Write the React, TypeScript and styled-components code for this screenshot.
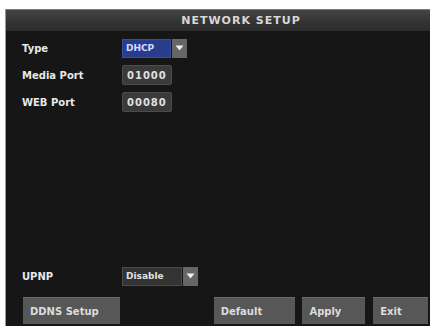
import React from "react";
import styled, { createGlobalStyle } from "styled-components";

const GlobalStyle = createGlobalStyle`
    html, body {
        margin: 0;
        padding: 0;
        background: #ffffff;
    }
`;

const Panel = styled.div`
    margin: 9px 4px 0 5px;
    width: 425px;
    height: 317px;
    background: #161616;
    border-left: 1px solid #9a9a9a;
    border-top: 1px solid #7a7a7a;
    box-sizing: border-box;
    display: flex;
    flex-direction: column;
    font-family: "DejaVu Sans", "Liberation Sans", sans-serif;
    font-weight: bold;
    color: #e4e4e4;
`;

const TitleBar = styled.div`
    height: 21px;
    background: linear-gradient(#444444, #333333 60%, #2c2c2c);
    display: flex;
    align-items: center;
    justify-content: center;
    padding-left: 46px;
    font-size: 11px;
    letter-spacing: 1px;
    color: #d8d8d8;
`;

const Body = styled.div`
    flex: 1;
    display: flex;
    flex-direction: column;
    padding: 7px 2px 2px 16px;
`;

const Row = styled.div<{ $gap?: number }>`
    display: flex;
    align-items: center;
    height: 20px;
    margin-bottom: ${p => p.$gap ?? 7}px;
`;

const Label = styled.div`
    width: 100px;
    font-size: 10px;
    color: #e8e8e8;
`;

const Field = styled.div`
    height: 20px;
    padding: 0 4px;
    background: #3a3a3a;
    border: 1px solid #4c4c4c;
    border-radius: 2px;
    box-sizing: border-box;
    display: flex;
    align-items: center;
    font-size: 10px;
    letter-spacing: 1px;
    color: #e0e0e0;
`;

const Select = styled.div`
    display: flex;
    height: 19px;
`;

const SelectValue = styled.div<{ $blue?: boolean; $width: number }>`
    width: ${p => p.$width}px;
    background: ${p => (p.$blue ? "#2a3c8c" : "#333333")};
    border: 1px solid ${p => (p.$blue ? "#3c4c9a" : "#4a4a4a")};
    box-sizing: border-box;
    display: flex;
    align-items: center;
    padding-left: 3px;
    font-size: 9px;
    color: ${p => (p.$blue ? "#d6dcff" : "#e0e0e0")};
`;

const Arrow = styled.div<{ $gapLeft?: number }>`
    width: 15px;
    margin-left: ${p => p.$gapLeft ?? 0}px;
    background: #666666;
    display: flex;
    align-items: center;
    justify-content: center;
`;

const Spacer = styled.div`
    flex: 1;
`;

const ButtonBar = styled.div`
    display: flex;
    height: 27px;
    margin-left: 1px;
`;

const Button = styled.div<{ $width: number; $gapLeft?: number }>`
    width: ${p => p.$width}px;
    margin-left: ${p => p.$gapLeft ?? 0}px;
    background: #575757;
    border-top: 1px solid #6a6a6a;
    box-sizing: border-box;
    display: flex;
    align-items: center;
    padding-left: 7px;
    font-size: 10px;
    color: #dcdcdc;
`;

const DownArrow = () => (
    <svg width="9" height="6" viewBox="0 0 9 6">
        <path d="M0.5 0.5 L8.5 0.5 L4.5 5.5 Z" fill="#f0f0f0" />
    </svg>
);

const App = () => {
    return (
        <>
            <GlobalStyle />
            <Panel>
                <TitleBar>NETWORK SETUP</TitleBar>
                <Body>
                    <Row>
                        <Label>Type</Label>
                        <Select>
                            <SelectValue $blue $width={49}>DHCP</SelectValue>
                            <Arrow $gapLeft={1}><DownArrow /></Arrow>
                        </Select>
                    </Row>
                    <Row>
                        <Label>Media Port</Label>
                        <Field>01000</Field>
                    </Row>
                    <Row>
                        <Label>WEB Port</Label>
                        <Field>00080</Field>
                    </Row>
                    <Spacer />
                    <Row $gap={11}>
                        <Label>UPNP</Label>
                        <Select>
                            <SelectValue $width={60}>Disable</SelectValue>
                            <Arrow $gapLeft={1}><DownArrow /></Arrow>
                        </Select>
                    </Row>
                    <ButtonBar>
                        <Button $width={97}>DDNS Setup</Button>
                        <Button $width={82} $gapLeft={94}>Default</Button>
                        <Button $width={63} $gapLeft={7}>Apply</Button>
                        <Button $width={55} $gapLeft={8}>Exit</Button>
                    </ButtonBar>
                </Body>
            </Panel>
        </>
    );
};

export default App;
